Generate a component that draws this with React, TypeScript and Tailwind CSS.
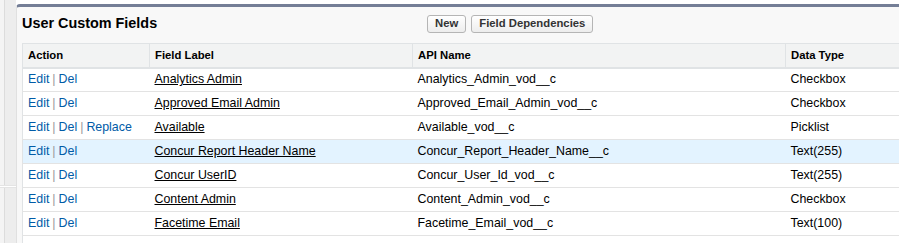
import React from "react";

interface FieldRow {
  label: string;
  apiName: string;
  dataType: string;
  canReplace?: boolean;
  highlighted?: boolean;
}

const rows: FieldRow[] = [
  { label: "Analytics Admin", apiName: "Analytics_Admin_vod__c", dataType: "Checkbox" },
  { label: "Approved Email Admin", apiName: "Approved_Email_Admin_vod__c", dataType: "Checkbox" },
  { label: "Available", apiName: "Available_vod__c", dataType: "Picklist", canReplace: true },
  { label: "Concur Report Header Name", apiName: "Concur_Report_Header_Name__c", dataType: "Text(255)", highlighted: true },
  { label: "Concur UserID", apiName: "Concur_User_Id_vod__c", dataType: "Text(255)" },
  { label: "Content Admin", apiName: "Content_Admin_vod__c", dataType: "Checkbox" },
  { label: "Facetime Email", apiName: "Facetime_Email_vod__c", dataType: "Text(100)" },
];

const ActionLink: React.FC<{ children: React.ReactNode }> = ({ children }) => (
  <a href="#" className="text-[#015ba7] no-underline">
    {children}
  </a>
);

const Pipe = () => <span className="text-[#999] px-[3px]">|</span>;

const PageButton: React.FC<{ children: React.ReactNode }> = ({ children }) => (
  <button className="h-[18px] px-[7px] rounded-[3px] border border-[#b5b5b5] bg-gradient-to-b from-white to-[#ededed] text-[11.3px] font-bold text-[#333] leading-none">
    {children}
  </button>
);

export default function App() {
  return (
    <div
      className="flex w-[899px] h-[243px] overflow-hidden bg-white"
      style={{ fontFamily: '"Liberation Sans", Arial, sans-serif' }}
    >
      {/* left gutter */}
      <div className="flex flex-col w-[16px] shrink-0">
        <div className="flex h-[185px]">
          <div className="w-[4px] bg-[#f4f4f4]" />
          <div className="w-[1px] bg-[#dcdcdc]" />
          <div className="flex-1 bg-[#ededed]" />
        </div>
        <div className="h-[3px] bg-white border-y border-[#e4e4e4]" />
        <div className="flex flex-1">
          <div className="w-[4px] bg-[#f4f4f4]" />
          <div className="w-[1px] bg-[#dcdcdc]" />
          <div className="flex-1 bg-[#ededed]" />
        </div>
      </div>

      <div className="flex-1 pt-[4px]">
        <div className="h-full bg-[#f8f8f8] border-t-[3px] border-t-[#747e96] border-l border-l-[#e0e0e0] rounded-tl-[4px] pl-[5px]">
          {/* title bar */}
          <div className="flex items-center h-[36px] pb-[3px]">
            <h2 className="w-[405px] text-[14.4px] font-bold text-black">User Custom Fields</h2>
            <div className="flex gap-[5px]">
              <PageButton>New</PageButton>
              <PageButton>Field Dependencies</PageButton>
            </div>
          </div>

          <table className="w-[1000px] table-fixed border-collapse bg-white border-l border-[#e0e3e5] text-[12.4px] text-black">
            <colgroup>
              <col className="w-[127px]" />
              <col className="w-[263px]" />
              <col className="w-[373px]" />
              <col />
            </colgroup>
            <thead>
              <tr className="h-[24px] bg-[#f2f3f3] border-t border-b-2 border-[#e0e3e5]">
                <th className="px-[5px] text-left text-[11.3px] font-bold">Action</th>
                <th className="px-[5px] text-left text-[11.3px] font-bold border-l border-[#e0e3e5]">Field Label</th>
                <th className="px-[5px] text-left text-[11.3px] font-bold border-l border-[#e0e3e5]">API Name</th>
                <th className="px-[5px] text-left text-[11.3px] font-bold border-l border-[#e0e3e5]">Data Type</th>
              </tr>
            </thead>
            <tbody>
              {rows.map((row) => (
                <tr
                  key={row.apiName}
                  className={`h-[24px] border-b border-[#e3e3e3] ${row.highlighted ? "bg-[#e3f3ff]" : ""}`}
                >
                  <td className="px-[5px] whitespace-nowrap">
                    <ActionLink>Edit</ActionLink>
                    <Pipe />
                    <ActionLink>Del</ActionLink>
                    {row.canReplace && (
                      <>
                        <Pipe />
                        <ActionLink>Replace</ActionLink>
                      </>
                    )}
                  </td>
                  <td className="px-[5px] whitespace-nowrap">
                    <a href="#" className="text-black underline">
                      {row.label}
                    </a>
                  </td>
                  <td className="px-[5px] whitespace-nowrap">{row.apiName}</td>
                  <td className="px-[5px] whitespace-nowrap">{row.dataType}</td>
                </tr>
              ))}
              <tr className="h-[24px]">
                <td colSpan={4} />
              </tr>
            </tbody>
          </table>
        </div>
      </div>
    </div>
  );
}
